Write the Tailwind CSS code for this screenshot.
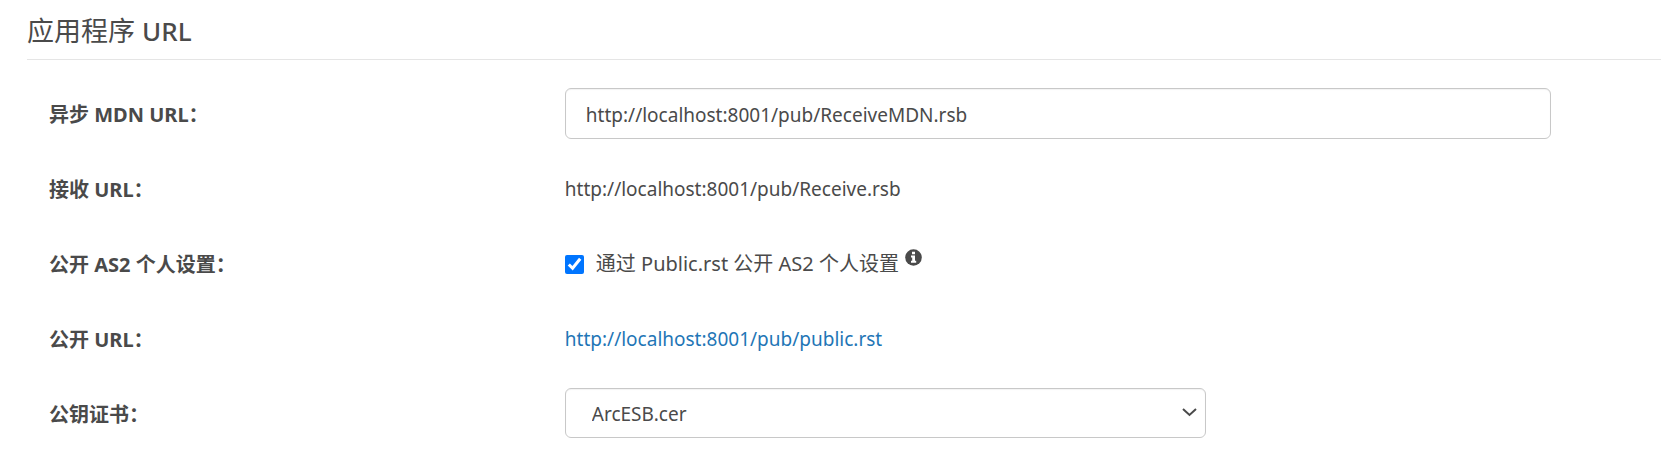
<!DOCTYPE html>
<html lang="zh-CN">

<head>
    <meta charset="UTF-8">
    <meta name="viewport" content="width=device-width, initial-scale=1.0">
    <title>应用程序 URL</title>
    <script src="https://cdn.jsdelivr.net/npm/@tailwindcss/browser@4"></script>
</head>

<body class="bg-white pl-[27px] font-['Noto_Sans','Noto_Sans_CJK_SC',sans-serif] text-xl text-[#4a4a4a]">
    <h1 class="border-b border-[#e5e5e5] pt-[11px] pb-2 text-[27px] leading-[39px]">应用程序 <span class="text-[26px] font-medium">URL</span></h1>

    <form class="space-y-6 pt-7 pl-[22px]">
        <div class="flex h-[51px] items-center">
            <label for="mdnUrl" class="w-[32%] shrink-0 pt-[3px] font-bold">异步 MDN URL：</label>
            <div class="flex-1">
                <input type="text" id="mdnUrl" name="mdnUrl" value="http://localhost:8001/pub/ReceiveMDN.rsb" class="block h-[51px] w-9/10 rounded-md border border-[#c8c8c8] px-5 pt-[3px] text-[19px] inset-shadow-xs">
            </div>
        </div>
        <div class="flex h-[51px] items-center">
            <div class="w-[32%] shrink-0 pt-[3px] font-bold">接收 URL：</div>
            <div class="flex-1 pt-px text-[19px]">http://localhost:8001/pub/Receive.rsb</div>
        </div>
        <div class="flex h-[51px] items-center">
            <div class="w-[32%] shrink-0 pt-[3px] font-bold">公开 AS2 个人设置：</div>
            <div class="flex flex-1 items-center pt-px">
                <input type="checkbox" id="publish" name="publish" checked class="mr-3 size-[19px] accent-[#0075ff]">
                <label for="publish">通过 Public.rst 公开 AS2 个人设置</label>
                <svg class="mb-[14px] ml-[6px] size-[17px]" viewBox="0 0 17 17" aria-hidden="true">
                    <circle cx="8.5" cy="8.5" r="8.3" fill="#4a4a4a" />
                    <path fill="#fff" d="M7 2.7h3v2.5H7zM6 6.5h4v5.2h1.2v2H6v-2h1.2V8.5H6z" />
                </svg>
            </div>
        </div>
        <div class="flex h-[51px] items-center">
            <div class="w-[32%] shrink-0 pt-[3px] font-bold">公开 URL：</div>
            <div class="flex-1 pt-px text-[19px]">
                <a href="http://localhost:8001/pub/public.rst" class="text-[#1f76b6] hover:underline">http://localhost:8001/pub/public.rst</a>
            </div>
        </div>
        <div class="flex h-[50px] items-center">
            <label for="certificate" class="w-[32%] shrink-0 pt-[3px] font-bold">公钥证书：</label>
            <div class="flex-1">
                <div class="relative w-[58.5%]">
                    <select id="certificate" name="certificate" class="block h-[50px] w-full appearance-none rounded-md border border-[#c8c8c8] px-[26px] pt-[3px] text-[19px] inset-shadow-xs">
                        <option>ArcESB.cer</option>
                    </select>
                    <svg class="pointer-events-none absolute top-[20px] right-[9px] h-[9px] w-[15px]" viewBox="0 0 15 9" fill="none" stroke="#4a4a4a" stroke-width="2" aria-hidden="true">
                        <path d="M1 1l6.5 6L14 1" />
                    </svg>
                </div>
            </div>
        </div>
    </form>
</body>

</html>
